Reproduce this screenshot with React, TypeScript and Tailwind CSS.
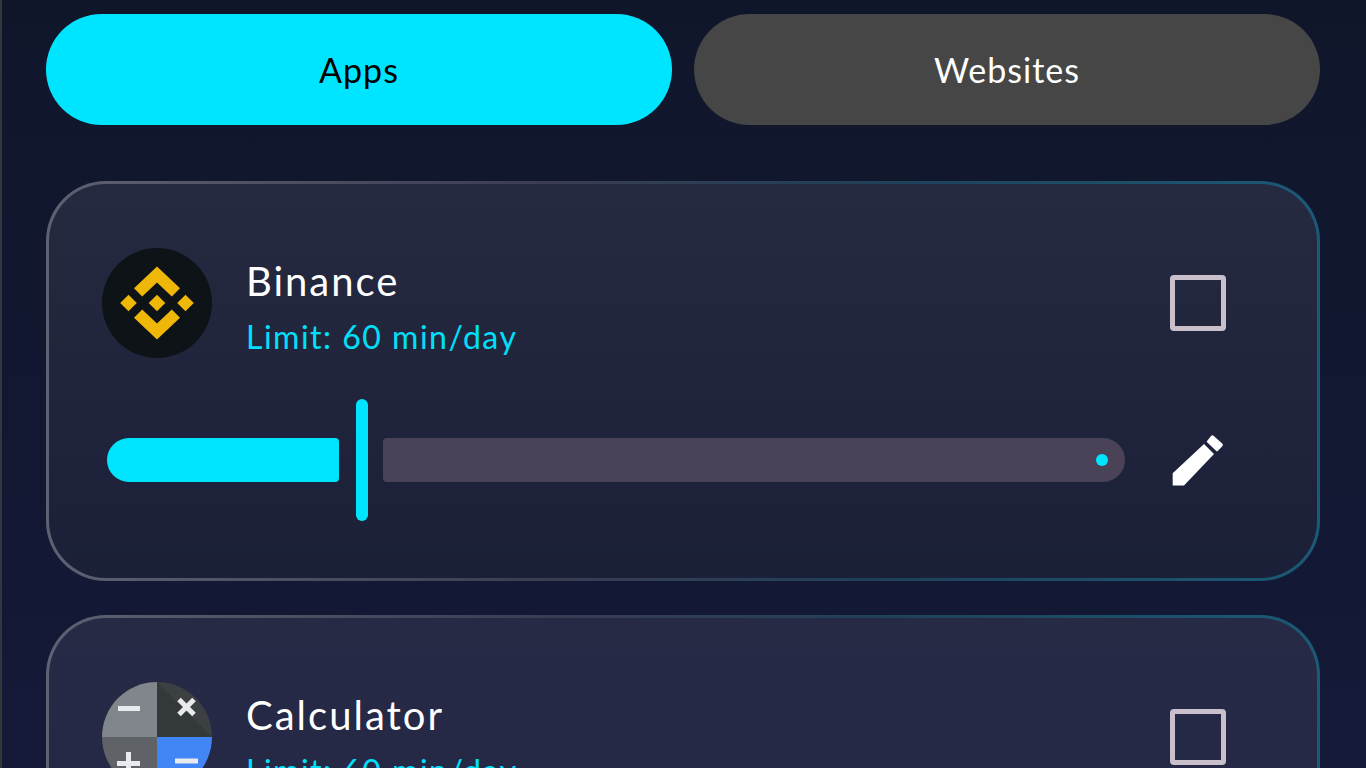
import React from "react";

function BinanceIcon() {
  return (
    <svg viewBox="-55 -55 110 110" className="w-[110px] h-[110px] shrink-0">
      <circle cx="0" cy="0" r="55" fill="#0e1317" />
      <g fill="#efb708">
        <polygon points="0,-36.5 23,-14.7 14.8,-6.4 0,-20.5 -14.8,-6.4 -23,-14.7" />
        <polygon points="0,36.5 23,14.7 14.8,6.4 0,20.5 -14.8,6.4 -23,14.7" />
        <polygon points="0,-8.3 8.3,0 0,8.3 -8.3,0" />
        <polygon points="-28.5,-8.3 -20.2,0 -28.5,8.3 -36.8,0" />
        <polygon points="28.5,-8.3 36.8,0 28.5,8.3 20.2,0" />
      </g>
    </svg>
  );
}

function CalculatorIcon() {
  return (
    <svg viewBox="0 0 110 110" className="w-[110px] h-[110px] shrink-0">
      <defs>
        <clipPath id="calc-clip">
          <circle cx="55" cy="55" r="55" />
        </clipPath>
      </defs>
      <g clipPath="url(#calc-clip)">
        <rect x="0" y="0" width="55" height="55" fill="#80868b" />
        <rect x="55" y="0" width="55" height="55" fill="#3c4043" />
        <polygon points="55,0 110,55 55,55" fill="#33383a" />
        <rect x="0" y="55" width="55" height="55" fill="#5f6368" />
        <rect x="55" y="55" width="55" height="55" fill="#4285f4" />
        <g stroke="#e8eaed" strokeWidth="5" fill="none">
          <path d="M16 26.5H38" />
          <path d="M77 17.5L92 32.5M92 17.5L77 32.5" />
          <path d="M15 81.5H38M26.5 70V94" />
          <path d="M73 79H96" />
        </g>
      </g>
    </svg>
  );
}

function PencilIcon() {
  return (
    <svg viewBox="1171 433 54 54" className="w-[54px] h-[54px] shrink-0 ml-[46px]">
      <g fill="#ffffff">
        <polygon points="1172.7,473.3 1204,444 1214,454 1184,485.5 1172.7,485.5" />
        <path d="M1211 436a2 2 0 0 1 2.8 0l8.4 7.5a2 2 0 0 1 0.1 2.8l-4.6 4.8a1 1 0 0 1-1.4 0l-9.2-8.8a1 1 0 0 1 0-1.4z" />
      </g>
    </svg>
  );
}

type AppCardProps = {
  name: string;
  limit: string;
  icon: React.ReactNode;
  bg: string;
};

function AppCard({ name, limit, icon, bg }: AppCardProps) {
  return (
    <div className="h-[400px] shrink-0 rounded-[60px] p-[3px] bg-[linear-gradient(90deg,#5e6172_0%,#3a3d52_40%,#1f4058_65%,#1b5a75_100%)]">
      <div className={`h-full rounded-[57px] pl-[53px] pt-[64px] ${bg}`}>
        <div className="flex items-center pr-[91px]">
          {icon}
          <div className="ml-[34px] pt-[7px] flex flex-col">
            <span className="text-[40px] leading-[46px] tracking-[2px] text-white">{name}</span>
            <span className="mt-[15px] text-[32px] leading-[36px] tracking-[1.5px] text-[#00e0fa]">{limit}</span>
          </div>
          <div className="ml-auto w-[56px] h-[56px] rounded-[4px] border-[5px] border-[#c9c0cc]" />
        </div>
        <div className="mt-[41px] ml-[5px] flex items-center h-[122px]">
          <div className="w-[232px] h-[44px] bg-[#00e5ff] rounded-l-[22px] rounded-r-[4px]" />
          <div className="ml-[17px] w-[12px] h-[122px] rounded-full bg-[#00e5ff]" />
          <div className="ml-[15px] w-[742px] h-[44px] flex items-center justify-end pr-[17px] bg-[#4a4358] rounded-l-[4px] rounded-r-[22px]">
            <div className="w-[12px] h-[12px] rounded-full bg-[#00e5ff]" />
          </div>
          <PencilIcon />
        </div>
      </div>
    </div>
  );
}

export default function App() {
  return (
    <div className="h-screen overflow-hidden border-l-2 border-[#34363c] pl-[44px] pr-[46px] pt-[14px] bg-[linear-gradient(180deg,#10162a_0%,#141a38_100%)] font-['Lato',sans-serif]">
      <div className="grid grid-cols-2 gap-[22px]">
        <button className="h-[111px] rounded-full bg-[#00e5ff] text-black text-[34px] tracking-[1px]">Apps</button>
        <button className="h-[111px] rounded-full bg-[#464646] text-white text-[34px] tracking-[1px]">Websites</button>
      </div>
      <div className="mt-[56px] flex flex-col gap-[34px]">
        <AppCard
          name="Binance"
          limit="Limit: 60 min/day"
          icon={<BinanceIcon />}
          bg="bg-[linear-gradient(180deg,#252a40_0%,#1b2039_100%)]"
        />
        <AppCard
          name="Calculator"
          limit="Limit: 60 min/day"
          icon={<CalculatorIcon />}
          bg="bg-[linear-gradient(180deg,#272a45_0%,#232745_100%)]"
        />
      </div>
    </div>
  );
}
